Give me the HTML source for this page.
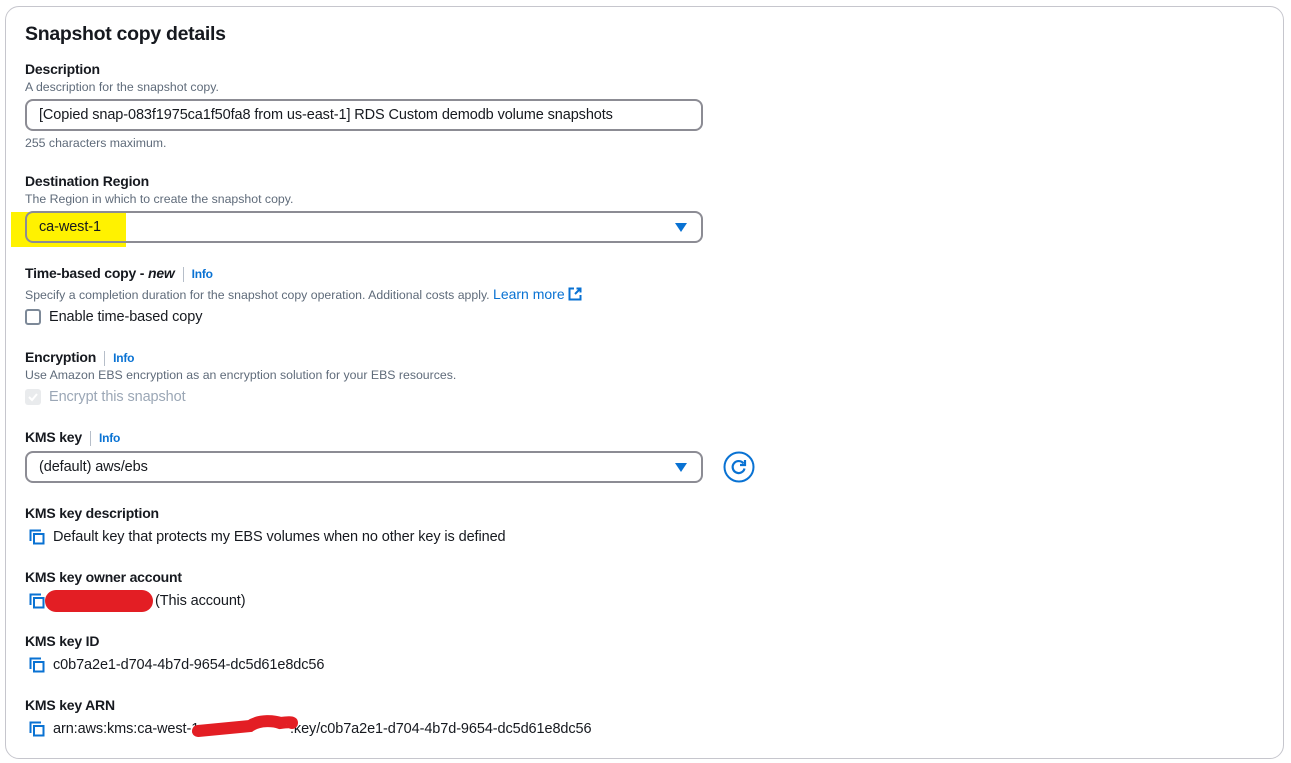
<!DOCTYPE html>
<html><head><meta charset="utf-8"><style>
*{margin:0;padding:0;box-sizing:border-box}
body{width:1291px;height:763px;background:#fff;font-family:"Liberation Sans",sans-serif;color:#16191f;position:relative;overflow:hidden}
.card{position:absolute;left:5px;top:6px;width:1279px;height:753px;border:1px solid #c6c6cd;border-radius:14px}
.a{position:absolute;white-space:nowrap;line-height:1}
.t{font-size:19.5px;font-weight:bold;letter-spacing:-0.3px}
.l{font-size:14px;font-weight:bold;letter-spacing:-0.2px}
.h{font-size:12.3px;color:#5f6b7a}
.v{font-size:14.5px;letter-spacing:-0.1px}
.info{font-size:12px;font-weight:bold;color:#0972d3;border-left:1px solid #b6bec9;padding-left:8px;margin-left:8px;line-height:15px;display:inline-block}
.box{position:absolute;border:2px solid #8c8c94;border-radius:8px;background:#fff}
.tri{position:absolute;width:0;height:0;border-left:6px solid transparent;border-right:6px solid transparent;border-top:9px solid #0972d3}
.cp{position:absolute;width:16px;height:16px}
</style></head><body>
<div class="card"></div>
<div class="a t" style="left:25px;top:25px">Snapshot copy details</div>

<div class="a l" style="left:25px;top:62px">Description</div>
<div class="a h" style="left:25px;top:81px">A description for the snapshot copy.</div>
<div class="box" style="left:25px;top:99px;width:678px;height:32px"></div>
<div class="a v" style="left:39px;top:108px">[Copied snap-083f1975ca1f50fa8 from us-east-1] RDS Custom demodb volume snapshots</div>
<div class="a h" style="left:25px;top:137px">255 characters maximum.</div>

<div class="a l" style="left:25px;top:174px">Destination Region</div>
<div class="a h" style="left:25px;top:193px">The Region in which to create the snapshot copy.</div>
<div style="position:absolute;left:11px;top:212px;width:115px;height:35px;background:#fff200"></div>
<div class="box" style="left:25px;top:211px;width:678px;height:32px;background:transparent"></div>
<div class="a v" style="left:39px;top:220px">ca-west-1</div>
<div class="tri" style="left:675px;top:223px"></div>

<div class="a l" style="left:25px;top:266px">Time-based copy - <i>new</i><span class="info">Info</span></div>
<div class="a h" style="left:25px;top:287px">Specify a completion duration for the snapshot copy operation. Additional costs apply. <span style="color:#0972d3;font-size:14px">Learn more</span>
<svg width="14" height="14" viewBox="0 0 14 14" style="vertical-align:-2px"><path d="M6 1.5H1.5v11h11V8M8.5 1.5h4v4M12.5 1.5 7 7" fill="none" stroke="#0972d3" stroke-width="2"/></svg></div>
<div style="position:absolute;left:25px;top:309px;width:16px;height:16px;border:2px solid #7d8998;border-radius:3px"></div>
<div class="a v" style="left:49px;top:310px">Enable time-based copy</div>

<div class="a l" style="left:25px;top:350px">Encryption<span class="info">Info</span></div>
<div class="a h" style="left:25px;top:369px">Use Amazon EBS encryption as an encryption solution for your EBS resources.</div>
<div style="position:absolute;left:25px;top:389px;width:16px;height:16px;background:#e9ebed;border-radius:3px"></div>
<svg style="position:absolute;left:27px;top:391px" width="12" height="12" viewBox="0 0 12 12"><path d="M2 6l3 3 5-6" fill="none" stroke="#fff" stroke-width="2"/></svg>
<div class="a v" style="left:49px;top:390px;color:#9ba7b6">Encrypt this snapshot</div>

<div class="a l" style="left:25px;top:430px">KMS key<span class="info">Info</span></div>
<div class="box" style="left:25px;top:451px;width:678px;height:32px"></div>
<div class="a v" style="left:39px;top:460px">(default) aws/ebs</div>
<div class="tri" style="left:675px;top:463px"></div>
<svg style="position:absolute;left:723px;top:451px" width="32" height="32" viewBox="0 0 32 32"><circle cx="16" cy="16" r="14.5" fill="none" stroke="#0972d3" stroke-width="2"/><path d="M20.5 12.5A6 6 0 1 0 21.5 17.5" fill="none" stroke="#0972d3" stroke-width="2.2"/><path d="M22 9v5h-5" fill="none" stroke="#0972d3" stroke-width="2.2"/></svg>

<div class="a l" style="left:25px;top:506px">KMS key description</div>
<svg class="cp" style="left:29px;top:529px" viewBox="0 0 16 16"><path d="M1.5 12V1.5H12" fill="none" stroke="#0972d3" stroke-width="2"/><rect x="5" y="5" width="9.5" height="9.5" fill="none" stroke="#0972d3" stroke-width="2"/></svg>
<div class="a v" style="left:53px;top:530px">Default key that protects my EBS volumes when no other key is defined</div>

<div class="a l" style="left:25px;top:570px">KMS key owner account</div>
<svg class="cp" style="left:29px;top:593px" viewBox="0 0 16 16"><path d="M1.5 12V1.5H12" fill="none" stroke="#0972d3" stroke-width="2"/><rect x="5" y="5" width="9.5" height="9.5" fill="none" stroke="#0972d3" stroke-width="2"/></svg>
<div style="position:absolute;left:45px;top:590px;width:108px;height:22px;background:#e31e24;border-radius:11px"></div>
<div class="a v" style="left:155px;top:594px">(This account)</div>

<div class="a l" style="left:25px;top:634px">KMS key ID</div>
<svg class="cp" style="left:29px;top:657px" viewBox="0 0 16 16"><path d="M1.5 12V1.5H12" fill="none" stroke="#0972d3" stroke-width="2"/><rect x="5" y="5" width="9.5" height="9.5" fill="none" stroke="#0972d3" stroke-width="2"/></svg>
<div class="a v" style="left:53px;top:658px">c0b7a2e1-d704-4b7d-9654-dc5d61e8dc56</div>

<div class="a l" style="left:25px;top:698px">KMS key ARN</div>
<svg class="cp" style="left:29px;top:721px" viewBox="0 0 16 16"><path d="M1.5 12V1.5H12" fill="none" stroke="#0972d3" stroke-width="2"/><rect x="5" y="5" width="9.5" height="9.5" fill="none" stroke="#0972d3" stroke-width="2"/></svg>
<div class="a v" style="left:53px;top:722px">arn:aws:kms:ca-west-1</div>
<div class="a v" style="left:290px;top:722px">:key/c0b7a2e1-d704-4b7d-9654-dc5d61e8dc56</div>
<svg style="position:absolute;left:190px;top:714px" width="112" height="26" viewBox="0 0 112 26"><path d="M8 17C30 15 50 13 60 12C70 5 85 7 90 9C98 8 102 8 102 9" fill="none" stroke="#e31e24" stroke-width="12" stroke-linecap="round"/></svg>
</body></html>
